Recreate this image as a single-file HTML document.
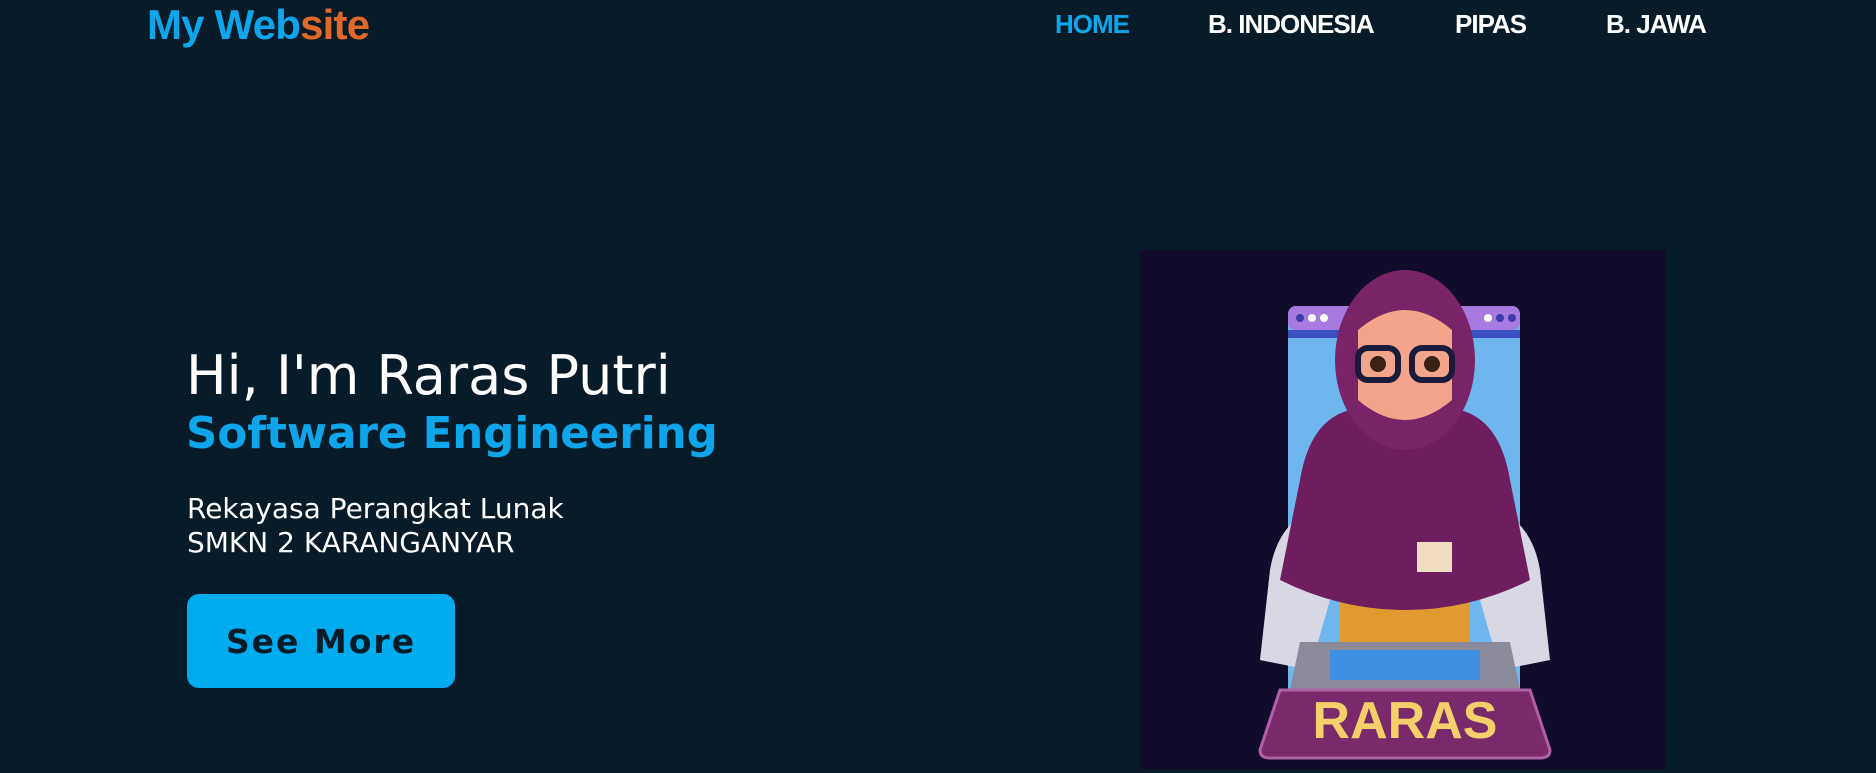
<!DOCTYPE html>
<html><head><meta charset="utf-8"><style>
*{margin:0;padding:0;box-sizing:border-box}
body{width:1876px;height:769px;background:#081b29;overflow:hidden;position:relative;font-family:"DejaVu Sans","Liberation Sans",sans-serif;color:#fff}
.logo{position:absolute;left:147px;top:1px;font:bold 42px "Liberation Sans",sans-serif;color:#0ea5ea;letter-spacing:-0.8px}
.logo span{color:#e0692a}
.nav a{position:absolute;top:9px;font:bold 26px "Liberation Sans",sans-serif;color:#fff;text-decoration:none;letter-spacing:-1px}
.t1{position:absolute;left:186px;top:344px;font-size:54px;line-height:64px;white-space:nowrap}
.t2{position:absolute;left:186px;top:406px;font-size:43.5px;font-weight:bold;color:#0ea5ea;line-height:56px;white-space:nowrap}
.t3{position:absolute;left:187px;top:492px;font-size:28px;line-height:34px}
.btn{position:absolute;left:187px;top:594px;width:268px;height:94px;background:#00abee;border-radius:12px;color:#081b29;font-weight:bold;font-size:33px;letter-spacing:2px;text-align:center;line-height:96px}
.pic{position:absolute;left:1140px;top:250px;width:525px;height:519px;background:#100c2a}
</style></head><body>
<div class="logo">My Web<span>site</span></div>
<div class="nav">
<a style="left:1055px;color:#0ea5ea">HOME</a>
<a style="left:1208px">B. INDONESIA</a>
<a style="left:1455px">PIPAS</a>
<a style="left:1606px">B. JAWA</a>
</div>
<div class="t1">Hi, I'm Raras Putri</div>
<div class="t2">Software Engineering</div>
<div class="t3">Rekayasa Perangkat Lunak<br>SMKN 2 KARANGANYAR</div>
<div class="btn">See More</div>
<div class="pic">
<svg width="525" height="519" viewBox="0 0 525 519">
<rect x="148" y="56" width="232" height="390" rx="8" fill="#6fb6ee"/>
<rect x="148" y="56" width="232" height="24" rx="8" fill="#a77ae0"/>
<rect x="148" y="80" width="232" height="8" fill="#3c4fc0"/>
<circle cx="160" cy="68" r="4" fill="#3a3aa8"/><circle cx="172" cy="68" r="4" fill="#fff"/><circle cx="184" cy="68" r="4" fill="#fff"/>
<circle cx="348" cy="68" r="4" fill="#fff"/><circle cx="360" cy="68" r="4" fill="#3a3aa8"/><circle cx="372" cy="68" r="4" fill="#3a3aa8"/>
<path d="M130 320 Q140 260 200 250 L330 250 Q390 260 400 320 L410 410 L360 420 L340 350 L190 350 L170 420 L120 410Z" fill="#d8d8e4"/>
<rect x="200" y="320" width="130" height="110" fill="#e09a30"/>
<path d="M160 230 Q170 170 210 160 L320 160 Q360 170 370 230 L390 330 Q330 360 265 360 Q200 360 140 330Z" fill="#6e1e5e"/>
<ellipse cx="265" cy="110" rx="70" ry="90" fill="#7a2468"/>
<path d="M218 80 Q265 40 312 80 L312 150 Q265 190 218 150Z" fill="#f2a58a"/>
<rect x="218" y="98" width="40" height="32" rx="10" fill="none" stroke="#1a1a3a" stroke-width="6"/>
<rect x="272" y="98" width="40" height="32" rx="10" fill="none" stroke="#1a1a3a" stroke-width="6"/>
<circle cx="238" cy="114" r="8" fill="#3a2216"/><circle cx="292" cy="114" r="8" fill="#3a2216"/>
<rect x="277" y="292" width="35" height="30" fill="#f0dcc0"/>
<path d="M160 392 L370 392 L380 440 L150 440Z" fill="#8a8a9a"/>
<rect x="190" y="400" width="150" height="30" fill="#3f8fe0"/>
<path d="M140 440 L390 440 L410 500 Q410 508 400 508 L130 508 Q120 508 120 500Z" fill="#7a2a6a" stroke="#b060a8" stroke-width="3"/>
<text x="265" y="488" text-anchor="middle" font-family="Liberation Sans,sans-serif" font-weight="bold" font-size="52" fill="#f5cf6a">RARAS</text>
</svg>
</div>
</body></html>
